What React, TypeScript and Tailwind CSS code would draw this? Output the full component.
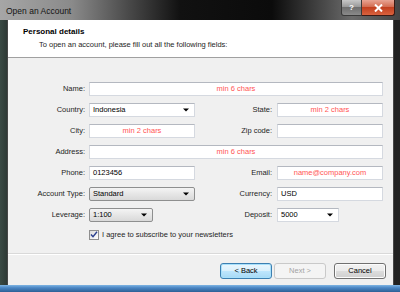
import React from 'react';

const ui = "font-['Liberation_Sans',Arial,sans-serif]";

function Arrow() {
    return (
        <svg width="6" height="4" viewBox="0 0 6 4" className="shrink-0">
            <path d="M0 0.5h6L3 3.5z" fill="#000" />
        </svg>
    );
}

function TextBox({value, hint, className = ''}: {value?: string; hint?: string; className?: string}) {
    return (
        <div className={`h-[14px] bg-white border border-[#d5d9e0] border-t-[#b4b8c0] flex items-center px-[3px] text-[7.5px] ${className}`}>
            {hint ? <span className="w-full text-center text-[#ff5454]">{hint}</span> : <span className="text-black">{value}</span>}
        </div>
    );
}

function Combo({value, gray, className = ''}: {value: string; gray?: boolean; className?: string}) {
    return (
        <div
            className={`h-[14px] flex items-center justify-between pl-[3px] pr-[5px] text-[7.5px] text-black ${
                gray
                    ? 'rounded-[2px] border border-[#8e8f8f] bg-[linear-gradient(#f4f4f4,#e6e6e6_50%,#d9d9d9)]'
                    : 'bg-white border border-[#d5d9e0] border-t-[#b4b8c0]'
            } ${className}`}
        >
            <span>{value}</span>
            <Arrow />
        </div>
    );
}

function Label({children}: {children: React.ReactNode}) {
    return <div className="h-[14px] flex items-center justify-end text-[7.5px] text-[#1e1e1e]">{children}</div>;
}

function Button({children, kind}: {children: React.ReactNode; kind: 'focus' | 'off' | 'normal'}) {
    const styles = {
        focus: 'border-[#3c7fb1] bg-[linear-gradient(#eaf6fd,#d9f0fc_50%,#bee6fd_50%,#a7d9f5)] text-black shadow-[inset_0_0_0_1px_#a8e0fb]',
        off: 'border-[#c9c9c9] bg-[#f4f4f4] text-[#a3a3a3]',
        normal: 'border-[#707070] bg-[linear-gradient(#f2f2f2,#ebebeb_50%,#dddddd_50%,#cfcfcf)] text-black shadow-[inset_0_0_0_1px_#fcfcfc]',
    };
    return (
        <div className={`w-[52px] h-[16px] rounded-[3px] border flex items-center justify-center text-[7.5px] ${styles[kind]}`}>
            {children}
        </div>
    );
}

export default function App() {
    return (
        <div className={`${ui} w-[400px] h-[292px] flex flex-col overflow-hidden bg-[linear-gradient(90deg,#3a4a44,#1e2422_4%,#151515_50%,#222_100%)]`}>
            {/* Title bar */}
            <div className="h-[20px] shrink-0 flex items-start justify-between bg-[linear-gradient(90deg,#a6a6a6_0%,#8a8a8a_18%,#4a4a4a_32%,#111_45%,#0b0b0b_68%,#4e4e4e_82%,#6b6b6b_88%,#444_100%)]">
                <div className="pl-[6px] pt-[5px] text-[8.5px] text-[#141414]">Open an Account</div>
                <div className="flex mr-[5px]">
                    <div className="w-[21px] h-[16px] rounded-bl-[3px] border border-t-0 border-[#3a3a3a] bg-[linear-gradient(#c7c7c7,#9a9a9a_45%,#6f6f6f_50%,#8a8a8a)] flex items-center justify-center text-[8px] font-bold text-white">
                        ?
                    </div>
                    <div className="w-[33px] h-[16px] rounded-br-[3px] border border-t-0 border-l-0 border-[#3a1a14] bg-[linear-gradient(#e8a493,#d36d52_45%,#c2401f_50%,#d8623e)] flex items-center justify-center">
                        <svg width="9" height="8" viewBox="0 0 9 8">
                            <path d="M1 0.5l7 7M8 0.5l-7 7" stroke="#fff" strokeWidth="2" />
                        </svg>
                    </div>
                </div>
            </div>

            {/* Client area */}
            <div className="flex-1 flex flex-col ml-[7px] mr-[6px] bg-[#f0f0f0] border-x border-[#474747]">
                <div className="h-[38px] shrink-0 bg-white border-b border-[#a0a0a0] pl-[15px] pt-[7px]">
                    <div className="text-[8px] font-bold text-black leading-[10px]">Personal details</div>
                    <div className="pl-[16px] mt-[3px] text-[7.5px] text-[#1e1e1e] leading-[10px]">
                        To open an account, please fill out all the following fields:
                    </div>
                </div>

                <div className="h-[195px] shrink-0 pt-[24px]">
                    <div className="grid grid-cols-[81px_106px_82px_106px] gap-y-[7px]">
                        <div className="pr-[4px]"><Label>Name:</Label></div>
                        <TextBox hint="min 6 chars" className="col-span-3" />

                        <div className="pr-[4px]"><Label>Country:</Label></div>
                        <Combo value="Indonesia" />
                        <div className="pr-[5px]"><Label>State:</Label></div>
                        <TextBox hint="min 2 chars" />

                        <div className="pr-[4px]"><Label>City:</Label></div>
                        <TextBox hint="min 2 chars" />
                        <div className="pr-[5px]"><Label>Zip code:</Label></div>
                        <TextBox />

                        <div className="pr-[4px]"><Label>Address:</Label></div>
                        <TextBox hint="min 6 chars" className="col-span-3" />

                        <div className="pr-[4px]"><Label>Phone:</Label></div>
                        <TextBox value="0123456" />
                        <div className="pr-[5px]"><Label>Email:</Label></div>
                        <TextBox hint="name@company.com" />

                        <div className="pr-[4px]"><Label>Account Type:</Label></div>
                        <Combo value="Standard" gray />
                        <div className="pr-[5px]"><Label>Currency:</Label></div>
                        <TextBox value="USD" />

                        <div className="pr-[4px]"><Label>Leverage:</Label></div>
                        <Combo value="1:100" gray className="w-[64px]" />
                        <div className="pr-[5px]"><Label>Deposit:</Label></div>
                        <Combo value="5000" className="w-[62px]" />

                        <div />
                        <div className="col-span-3 h-[11px] flex items-center gap-[3px]">
                            <div className="w-[10px] h-[10px] border border-[#8f8f8f] bg-[linear-gradient(135deg,#dcdcdc,#fff)] flex items-center justify-center">
                                <svg width="8" height="7" viewBox="0 0 8 7">
                                    <path d="M1 3.5l2 2.2L7 0.8" stroke="#2a3f8e" strokeWidth="1.4" fill="none" />
                                </svg>
                            </div>
                            <span className="text-[7.5px] text-[#1e1e1e]">I agree to subscribe to your newsletters</span>
                        </div>
                    </div>
                </div>

                <div className="border-t border-[#d9d9d9] border-b border-b-white" />

                <div className="flex-1 flex justify-end items-start pt-[8px] pr-[7px]">
                    <div className="flex gap-[2px]">
                        <Button kind="focus">&lt; Back</Button>
                        <Button kind="off">Next &gt;</Button>
                    </div>
                    <div className="ml-[8px]">
                        <Button kind="normal">Cancel</Button>
                    </div>
                </div>
            </div>

            {/* Bottom frame */}
            <div className="h-[7px] shrink-0 bg-[linear-gradient(#7fb5e4,#4a86c4_40%,#2d5f95)]" />
        </div>
    );
}
